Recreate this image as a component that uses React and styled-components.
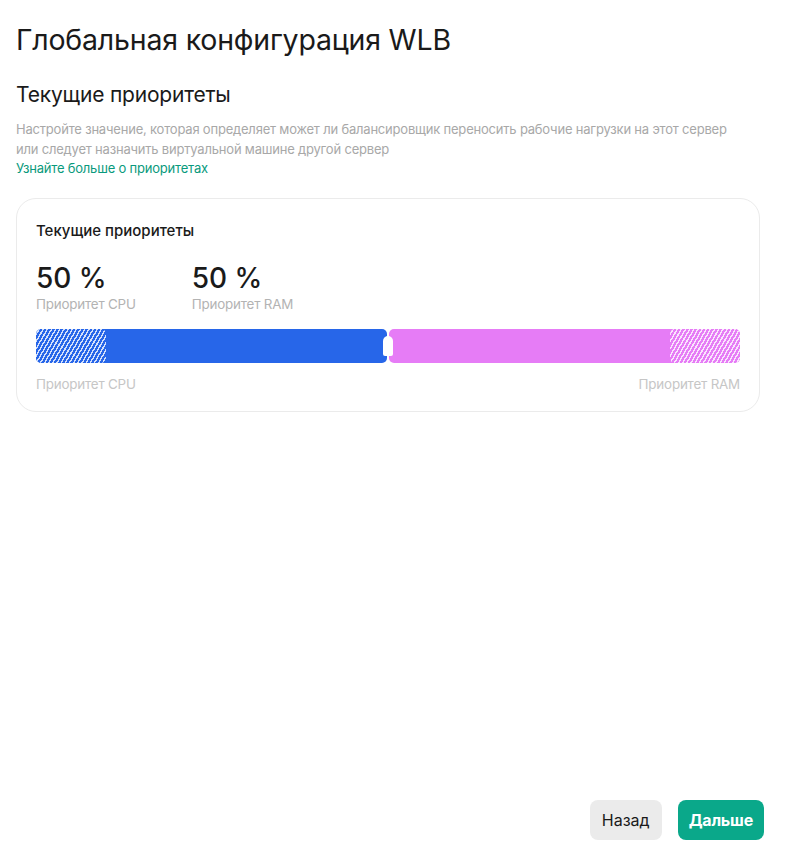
import React from "react";
import styled, { createGlobalStyle, css } from "styled-components";

const GlobalStyle = createGlobalStyle`
  html, body {
    margin: 0;
    padding: 0;
    background: #fff;
  }
  body {
    font-family: Inter, "Noto Sans", sans-serif;
    color: #1a1a1a;
  }
`;

const Page = styled.div`
  box-sizing: border-box;
  height: 860px;
  padding: 22px 22px 20px 16px;
  display: flex;
  flex-direction: column;
`;

const Title = styled.h1`
  margin: 0;
  font-size: 28.5px;
  font-weight: 400;
  letter-spacing: -0.2px;
  line-height: 36px;
`;

const SectionTitle = styled.h2`
  margin: 24px 0 0;
  font-size: 21px;
  font-weight: 400;
  letter-spacing: -0.2px;
  line-height: 26px;
`;

const Description = styled.p`
  margin: 12px 0 0;
  font-size: 13px;
  line-height: 19.5px;
  color: #a8a8a8;
  max-width: 725px;
  letter-spacing: -0.2px;
`;

const LearnLink = styled.a`
  display: block;
  font-size: 13px;
  line-height: 19.5px;
  color: #0a9a7d;
  text-decoration: none;
  letter-spacing: -0.2px;
`;

const Card = styled.section`
  margin-top: 19px;
  width: 744px;
  box-sizing: border-box;
  border: 1px solid #ebebeb;
  border-radius: 20px;
  padding: 22px 19px 18px 19px;
`;

const CardTitle = styled.h3`
  margin: 0;
  font-size: 15px;
  font-weight: 500;
  line-height: 20px;
`;

const Stats = styled.div`
  display: flex;
  gap: 56px;
  margin-top: 21px;
`;

const Stat = styled.div`
  display: flex;
  flex-direction: column;
`;

const StatValue = styled.span`
  font-size: 28px;
  font-weight: 500;
  line-height: 32px;
`;

const StatLabel = styled.span`
  font-size: 13.4px;
  line-height: 21px;
  color: #b3b3b3;
  letter-spacing: -0.2px;
`;

const Bar = styled.div`
  position: relative;
  display: flex;
  gap: 2px;
  height: 34px;
  margin-top: 14px;
`;

const hatch = (color) => css`
  background-image: repeating-linear-gradient(
    -60deg,
    ${color} 0 2.2px,
    rgba(255, 255, 255, 0.8) 2.2px 3.6px
  );
`;

const Segment = styled.div`
  flex: 1;
  display: flex;
  justify-content: ${(p) => (p.$side === "left" ? "flex-start" : "flex-end")};
  background: ${(p) => p.$color};
  border-radius: 5px;
  overflow: hidden;
`;

const Hatch = styled.div`
  width: 70px;
  border-radius: 5px;
  ${(p) => hatch(p.$color)}
`;

const Handle = styled.div`
  position: absolute;
  left: calc(50% - 5px);
  top: 7px;
  width: 10px;
  height: 20px;
  background: #fff;
  border-radius: 5px 5px 2px 2px;
`;

const BarLabels = styled.div`
  display: flex;
  justify-content: space-between;
  margin-top: 12px;
  font-size: 13.4px;
  line-height: 18px;
  color: #c6c6c6;
  letter-spacing: -0.2px;
`;

const Footer = styled.div`
  margin-top: auto;
  display: flex;
  justify-content: flex-end;
  gap: 16px;
`;

const Button = styled.button`
  height: 40px;
  border: 0;
  border-radius: 8px;
  font-family: Inter, "Noto Sans", sans-serif;
  font-size: 16px;
  cursor: pointer;
  ${(p) =>
    p.$primary
      ? css`
          padding: 0 11px;
          background: #0aa88a;
          color: #fff;
          font-weight: 700;
          letter-spacing: -0.2px;
        `
      : css`
          padding: 0 12px;
          background: #ebebeb;
          color: #1a1a1a;
          font-weight: 400;
        `}
`;

export default function App() {
  return (
    <>
      <GlobalStyle />
      <Page>
        <Title>Глобальная конфигурация WLB</Title>
        <SectionTitle>Текущие приоритеты</SectionTitle>
        <Description>
          Настройте значение, которая определяет может ли балансировщик переносить рабочие
          нагрузки на этот сервер или следует назначить виртуальной машине другой сервер
        </Description>
        <LearnLink href="#">Узнайте больше о приоритетах</LearnLink>
        <Card>
          <CardTitle>Текущие приоритеты</CardTitle>
          <Stats>
            <Stat>
              <StatValue>50 %</StatValue>
              <StatLabel>Приоритет CPU</StatLabel>
            </Stat>
            <Stat>
              <StatValue>50 %</StatValue>
              <StatLabel>Приоритет RAM</StatLabel>
            </Stat>
          </Stats>
          <Bar>
            <Segment $color="#2766e9" $side="left">
              <Hatch $color="#2766e9" />
            </Segment>
            <Segment $color="#e67cf6" $side="right">
              <Hatch $color="#e67cf6" />
            </Segment>
            <Handle />
          </Bar>
          <BarLabels>
            <span>Приоритет CPU</span>
            <span>Приоритет RAM</span>
          </BarLabels>
        </Card>
        <Footer>
          <Button>Назад</Button>
          <Button $primary>Дальше</Button>
        </Footer>
      </Page>
    </>
  );
}
